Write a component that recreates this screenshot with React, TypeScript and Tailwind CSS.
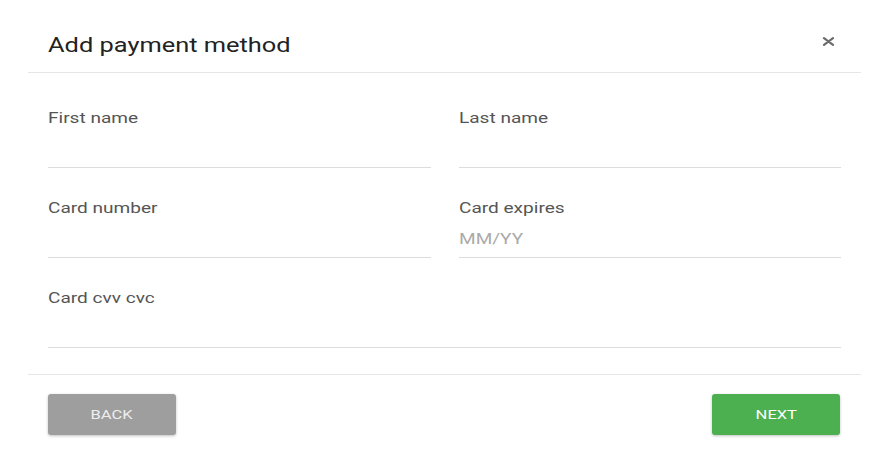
import { ReactNode } from "react";

// the whole dialog's type is drawn a bit wide, so text gets stretched horizontally
const wide = "origin-left scale-x-[1.27]";

function Field({ label, placeholder, className }: { label: string; placeholder?: string; className?: string }) {
  return (
    <label className={`block ${className ?? ""}`}>
      <span className={`block w-fit ${wide} text-[15px] leading-[18px] text-[#555]`}>{label}</span>
      <div className="flex h-[41px] items-center border-b border-[#dcdcdc] pt-[5px]">
        {placeholder && <span className={`inline-block ${wide} text-[15px] text-[#aaa]`}>{placeholder}</span>}
      </div>
    </label>
  );
}

function Button({ children, className }: { children: ReactNode; className: string }) {
  return (
    <button
      className={`h-[41px] w-[128px] rounded-[3px] text-[13px] shadow-[0_1px_3px_rgba(0,0,0,0.25)] ${className}`}
    >
      <span className="inline-block scale-x-[1.27]">{children}</span>
    </button>
  );
}

export default function App() {
  return (
    <div className="min-h-screen w-full overflow-hidden bg-white pt-[17px] pl-[28px]" style={{ fontFamily: "Roboto, 'Liberation Sans', sans-serif" }}>
      <div className="w-[833px] bg-white">
        {/* header */}
        <div className="flex h-[56px] items-center justify-between border-b border-[#e6e6e6] px-5">
          <h2 className={`inline-block ${wide} text-[20px] leading-[24px] text-[#222]`}>Add payment method</h2>
          <button className="mr-[6px] mt-[-7px] text-[#6b6b6b]" aria-label="close">
            <svg viewBox="0 0 13 9" className="h-[9px] w-[13px]" stroke="currentColor" strokeWidth="2.2" strokeLinecap="round">
              <path d="M2 1.2l9 6.6M11 1.2l-9 6.6" />
            </svg>
          </button>
        </div>

        {/* form */}
        <div className="grid grid-cols-2 gap-x-[28px] gap-y-[31px] px-5 pt-[36px] pb-[26px]">
          <Field label="First name" />
          <Field label="Last name" />
          <Field label="Card number" />
          <Field label="Card expires" placeholder="MM/YY" />
          <Field label="Card cvv cvc" className="col-span-2" />
        </div>

        {/* footer */}
        <div className="flex items-start justify-between border-t border-[#e6e6e6] px-5 pt-[19px] pb-[22px]">
          <Button className="bg-[#9e9e9e] text-[#eeeeee]">BACK</Button>
          <Button className="mr-[1px] bg-[#4caf50] text-white">NEXT</Button>
        </div>
      </div>
    </div>
  );
}
